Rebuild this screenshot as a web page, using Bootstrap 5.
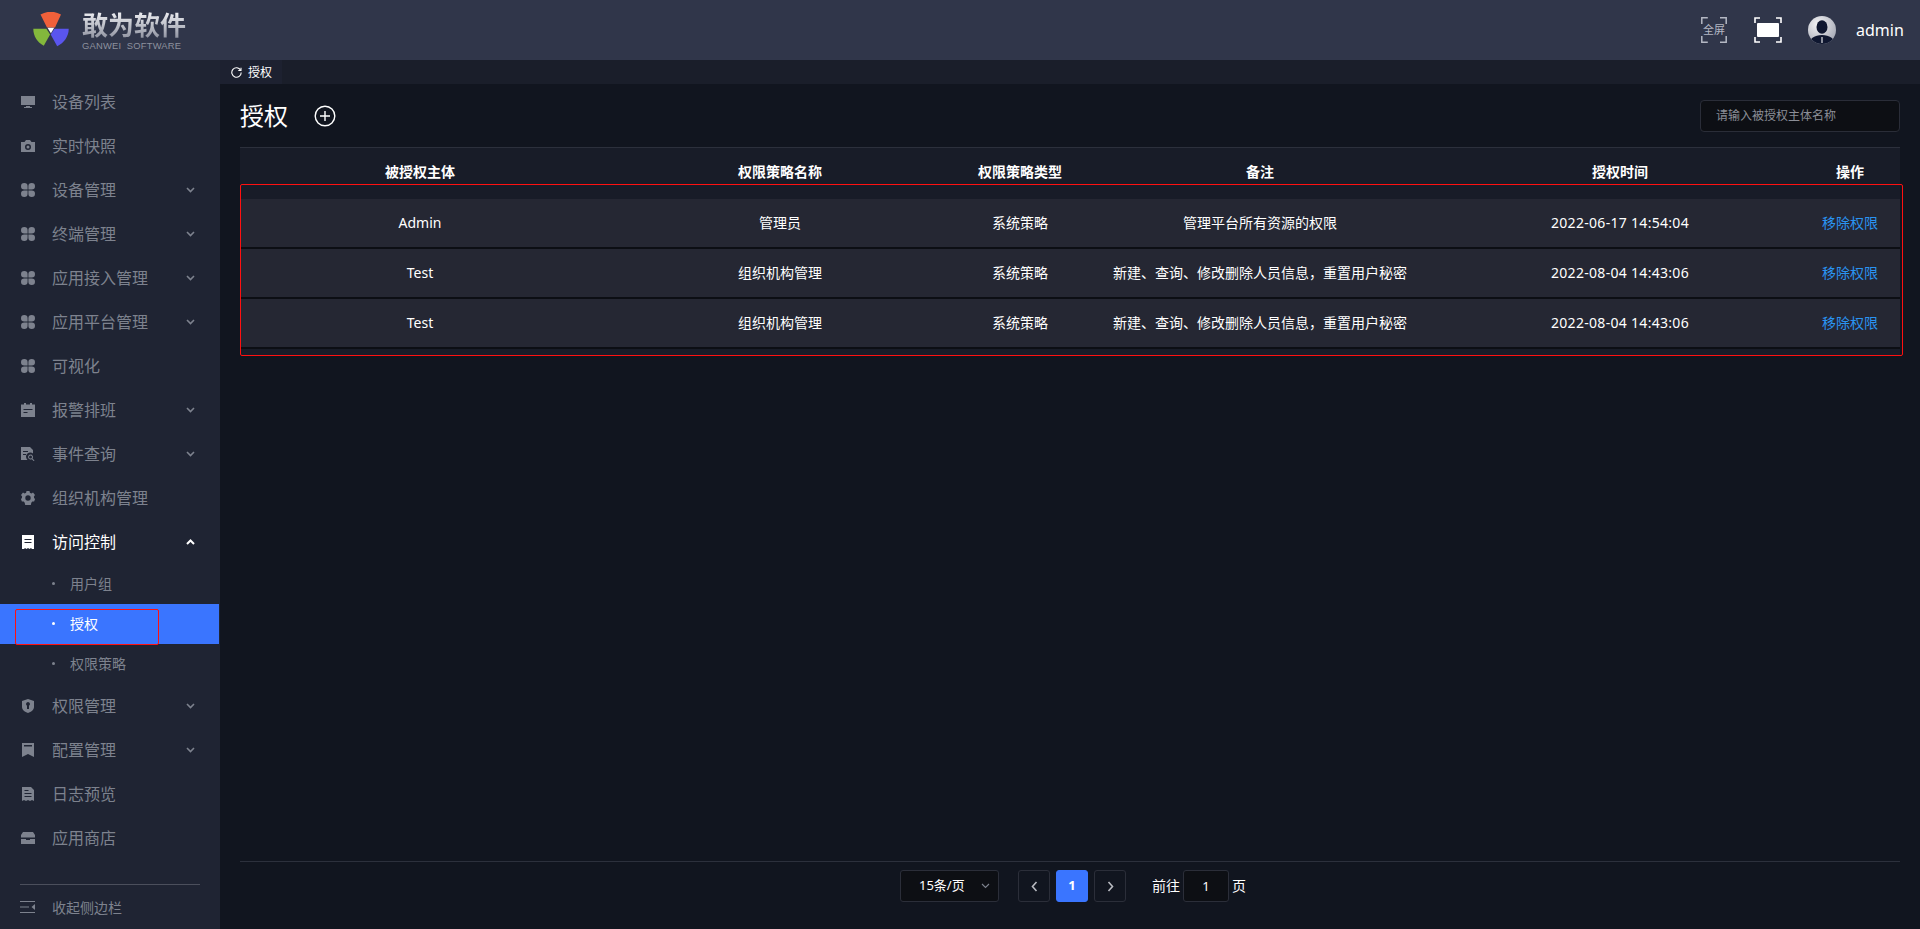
<!DOCTYPE html>
<html lang="zh">
<head>
<meta charset="utf-8">
<title>授权</title>
<link href="https://cdn.jsdelivr.net/npm/bootstrap@5.3.0/dist/css/bootstrap.min.css" rel="stylesheet">
<style>
html,body{height:929px;overflow:hidden}
body{background:#11151f;color:#fff;font-family:"Noto Sans","Noto Sans CJK SC",sans-serif;font-size:14px}
.topbar{height:60px;background:#30364a;padding-left:33px;padding-right:16px}
.brand-cn{font-size:26px;line-height:30px;font-weight:700;background:linear-gradient(#f4f5f8,#8a8e9c);-webkit-background-clip:text;background-clip:text;color:transparent;letter-spacing:0}
.brand-en{font-family:"Liberation Sans",sans-serif;font-size:9.4px;line-height:11px;color:#8d919e;white-space:pre;letter-spacing:.2px}
.brand-box{margin-left:13px;padding-top:1px}
.top-ico{display:block}
.admin-name{font-size:16px;color:#fff;margin-left:20px;width:48px}
.side{width:220px;flex:none;background:#1f2433;height:869px;padding-top:20px}
.side-item{height:44px;color:#7d828e;font-size:16px;padding-left:21px;padding-right:25px}
.side-item svg.ic{width:14px;height:14px;margin-right:17px;flex:none;fill:currentColor}
.side-item .chev{margin-left:auto;width:9px;height:6px;fill:none;stroke:currentColor;stroke-width:1.6}
.side-open{color:#fff}
.sub-item{height:40px;padding-left:52px;padding-bottom:2px;color:#7d828e;font-size:14px;width:219px}
.sub-item i{display:block;width:3px;height:3px;border-radius:50%;background:currentColor;margin-right:15px}
.sub-on{background:#3a75ff;color:#fff}
.mark-red{position:absolute;border:1px solid #ff1010;border-radius:2px;pointer-events:none}
.mark-side{left:15px;top:5px;width:144px;height:36px}
.side-foot{margin-top:auto;padding:0 20px 0}
.side-rule{border-top:1px solid #4b4f5c;height:1px}
.side-collapse{height:44px;color:#7d828e;font-size:14px}
.side-collapse svg{margin-right:17px;margin-left:0}
.main-pane{height:869px;min-width:0}
.tab-strip{height:24px;background:#1a1e2a}
.tab-one{width:62px;height:24px;background:#1d2130;font-size:12px;padding-left:11px;gap:6px;padding-top:1px}
.work{height:845px;padding:0 20px;display:flex;flex-direction:column}
.head-row{height:63px}
.page-h{font-size:24px;line-height:32px;margin:0;font-weight:400}
.add-ico{margin-left:26px}
.find-box{width:200px;height:32px;background:#0d0f14;border:1px solid #2a2d38;border-radius:4px;color:#e8e8e8;font-size:12px;padding:0 15px;outline:0}
.find-box::placeholder{color:#8b8e97;opacity:1}
.grid-wrap{position:relative;border-top:1px solid #2c303c;background:#181c28;height:209px}
.grid-t{table-layout:fixed;width:100%;margin:0;border-collapse:separate;border-spacing:0;color:#fff}
.grid-t th{height:36px;padding:11px 0 0;background:transparent;color:#fff;font-size:14px;font-weight:700;text-align:center;border:0;line-height:24px;box-shadow:none}
.grid-t tbody::before{content:"";display:block;height:15px}
.grid-t td{height:50px;padding:0 0 2px;background:#252733;color:#fff;text-align:center;vertical-align:middle;font-size:14px;border:0;border-bottom:2px solid #0c0e14;background-clip:padding-box;box-shadow:none}
.grid-t td.time-cell{letter-spacing:.3px}
.act-link{color:#2a94f2;text-decoration:none}
.mark-grid{left:0;top:36px;width:1663px;height:172px}
.pager-zone{margin-top:auto;border-top:1px solid #2c303c;height:68px;padding-top:8px;padding-left:6px}
.pg-select,.pg-btn,.pg-input{height:32px;border:1px solid #2b2e39;border-radius:3px;font-size:13px}
.pg-select{width:99px;background:#0d0f14;color:#fff;padding-left:18px;margin-right:19px}
.pg-btn{width:32px;background:transparent;color:#b8bac0;margin-right:6px;padding:0}
.pg-on{background:#3a75ff;border-color:#3a75ff;color:#fff;font-weight:700}
.pg-input{width:46px;background:#0d0f14;color:#fff;margin:0 3px;text-align:center;line-height:30px}
.pg-label{font-size:14px;line-height:32px}
</style>
</head>
<body>
<svg width="0" height="0" style="position:absolute"><defs>
<symbol id="i-clover" viewBox="0 0 14 14"><path d="M6.600 6.600V3.300A3.300 3.300 0 1 0 3.300 6.600zM7.400 6.600V3.300A3.300 3.300 0 1 1 10.700 6.600zM6.600 7.400V10.700A3.300 3.300 0 1 1 3.300 7.400zM7.400 7.400V10.700A3.300 3.300 0 1 0 10.700 7.400z"/></symbol>
</defs></svg>

<header class="topbar d-flex align-items-center">
  <svg width="36" height="36" viewBox="0 0 36 36" class="top-ico">
    <path d="M7.500 2.600a21 21 0 0 1 20.500 0L22 15.500h-8z" fill="#f0603a"/>
    <path d="M.300 16.800h13.100l3.700 5.600-6.300 11.300C4.200 30.400.3 24 .300 16.800z" fill="#83b83c"/>
    <path d="M35.700 16.800H21.500l-3.800 5.700 6.500 11.700c6.800-3.300 11.500-9.500 11.500-17.400z" fill="#5a55ee"/>
    <path d="M14.500 15.800h6.700l-3.300 5.500z" fill="#fff"/>
  </svg>
  <div class="brand-box">
    <div class="brand-cn">敢为软件</div>
    <div class="brand-en">GANWEI  SOFTWARE</div>
  </div>
  <div class="ms-auto d-flex align-items-center">
    <svg width="26" height="26" viewBox="0 0 26 26" class="top-ico" style="margin-right:27px">
      <path d="M.800 7V.800h6M19 .800h6.200V7M.800 19v6.200h6M19 25.200h6.200V19" fill="none" stroke="#b4b8c4" stroke-width="1.500"/>
      <text x="13" y="17" text-anchor="middle" font-size="11" fill="#b4b8c4" font-family="Noto Sans CJK SC">全屏</text>
    </svg>
    <svg width="28" height="26" viewBox="0 0 28 26" class="top-ico" style="margin-right:26px">
      <path d="M1 6V1h5M22 1h5v5M1 20v5h5M22 25h5v-5" fill="none" stroke="#fff" stroke-width="1.600"/>
      <rect x="3" y="6" width="22" height="14" rx="1" fill="#fff"/>
    </svg>
    <svg width="28" height="28" viewBox="0 0 28 28" class="top-ico">
      <defs>
        <clipPath id="av"><circle cx="14" cy="14" r="14"/></clipPath>
        <radialGradient id="avg" cx=".35" cy=".3" r=".85"><stop offset="0" stop-color="#f4f4f6"/><stop offset="1" stop-color="#9da1ae"/></radialGradient>
      </defs>
      <circle cx="14" cy="14" r="14" fill="url(#avg)"/>
      <g clip-path="url(#av)">
        <ellipse cx="14" cy="11" rx="5.500" ry="6.800" fill="#0f1730"/>
        <path d="M1 28c.5-5.500 5.500-9 13-9s12.500 3.500 13 9z" fill="#0f1730"/>
        <path d="M13.400 21h1.200v6h-1.200z" fill="#dfe1e6"/>
      </g>
    </svg>
    <div class="admin-name">admin</div>
  </div>
</header>

<div class="d-flex">
  <aside class="side d-flex flex-column">
    <div class="side-item d-flex align-items-center"><svg class="ic" viewBox="0 0 14 14"><path d="M0 1h14v9H0zM5 11h4v1h2v1H3v-1h2z"/></svg>设备列表</div>
    <div class="side-item d-flex align-items-center"><svg class="ic" viewBox="0 0 14 14"><path fill-rule="evenodd" d="M0 3h3.500L5 1h4l1.500 2H14v10H0zM7 5a3 3 0 1 0 0 6 3 3 0 0 0 0-6zm0 1.500a1.500 1.500 0 1 1 0 3 1.500 1.500 0 0 1 0-3z"/></svg>实时快照</div>
    <div class="side-item d-flex align-items-center"><svg class="ic"><use href="#i-clover"/></svg>设备管理<svg class="chev" viewBox="0 0 9 6"><path d="M1 1l3.500 3.500L8 1"/></svg></div>
    <div class="side-item d-flex align-items-center"><svg class="ic"><use href="#i-clover"/></svg>终端管理<svg class="chev" viewBox="0 0 9 6"><path d="M1 1l3.500 3.500L8 1"/></svg></div>
    <div class="side-item d-flex align-items-center"><svg class="ic"><use href="#i-clover"/></svg>应用接入管理<svg class="chev" viewBox="0 0 9 6"><path d="M1 1l3.500 3.500L8 1"/></svg></div>
    <div class="side-item d-flex align-items-center"><svg class="ic"><use href="#i-clover"/></svg>应用平台管理<svg class="chev" viewBox="0 0 9 6"><path d="M1 1l3.500 3.500L8 1"/></svg></div>
    <div class="side-item d-flex align-items-center"><svg class="ic"><use href="#i-clover"/></svg>可视化</div>
    <div class="side-item d-flex align-items-center"><svg class="ic" viewBox="0 0 14 14"><path fill-rule="evenodd" d="M3 0h2v1.500h4V0h2v1.500h3V14H0V1.500h3zM2.500 6v1h9V6zm0 3v1h4V9z"/></svg>报警排班<svg class="chev" viewBox="0 0 9 6"><path d="M1 1l3.500 3.500L8 1"/></svg></div>
    <div class="side-item d-flex align-items-center"><svg class="ic" viewBox="0 0 14 14"><path fill-rule="evenodd" d="M0 0h9l3 3v3.500a4 4 0 0 0-5.500 6.500H0zM2 4v1h5V4zm0 3v1h3V7z"/><path d="M9.500 7.500a2.500 2.500 0 0 1 2 4l2 2-.7.700-2-2a2.500 2.500 0 1 1-1.300-4.700zm0 1a1.500 1.500 0 1 0 0 3 1.500 1.500 0 0 0 0-3z"/></svg>事件查询<svg class="chev" viewBox="0 0 9 6"><path d="M1 1l3.500 3.500L8 1"/></svg></div>
    <div class="side-item d-flex align-items-center"><svg class="ic" viewBox="0 0 14 14"><path fill-rule="evenodd" d="M5.500 0h3l.4 1.800 1.500.7L12 1.600l2 2.400-1.100 1.500.2 1.500 1 1-1 2.500-1.800.1-1 1.200L9.800 14H4.200l-.5-2.200-1-1.200-1.800-.1-1-2.500 1-1 .2-1.500L0 4l2-2.400 1.600.9 1.500-.7zM7 4.300a2.700 2.700 0 1 0 0 5.400 2.700 2.700 0 0 0 0-5.400z"/></svg>组织机构管理</div>
    <div class="side-item side-open d-flex align-items-center"><svg class="ic" viewBox="0 0 14 14"><path fill-rule="evenodd" d="M1 0h12v14h-2l-1-1-1.500 1-1.500-1-1.500 1L4 13l-1 1H1zM3.500 4v1h7V4zm0 3v1h7V7z"/></svg>访问控制<svg class="chev" style="stroke-width:2" viewBox="0 0 9 6"><path d="M1 5l3.500-3.500L8 5"/></svg></div>
    <div class="sub-item d-flex align-items-center"><i></i>用户组</div>
    <div class="sub-item sub-on d-flex align-items-center position-relative"><i></i>授权<div class="mark-red mark-side"></div></div>
    <div class="sub-item d-flex align-items-center"><i></i>权限策略</div>
    <div class="side-item d-flex align-items-center"><svg class="ic" viewBox="0 0 14 14"><path fill-rule="evenodd" d="M7 0l6 2v6c0 3-3 5-6 6-3-1-6-3-6-6V2zM7 3a2 2 0 0 0-1 3.700V10h2V6.700A2 2 0 0 0 7 3z"/></svg>权限管理<svg class="chev" viewBox="0 0 9 6"><path d="M1 1l3.500 3.500L8 1"/></svg></div>
    <div class="side-item d-flex align-items-center"><svg class="ic" viewBox="0 0 14 14"><path fill-rule="evenodd" d="M1 0h12v14l-6-3-6 3zM3 2v1.500h8V2z"/></svg>配置管理<svg class="chev" viewBox="0 0 9 6"><path d="M1 1l3.500 3.500L8 1"/></svg></div>
    <div class="side-item d-flex align-items-center"><svg class="ic" viewBox="0 0 14 14"><path fill-rule="evenodd" d="M1 0h9l3 3v11l-2-1-2 1-2-1-2 1-2-1-2 1zM3.500 6v1h7V6zm0 3v1h7V9zm0-6v1h4V3z"/></svg>日志预览</div>
    <div class="side-item d-flex align-items-center"><svg class="ic" viewBox="0 0 14 14"><path fill-rule="evenodd" d="M2 1h10l2 3v2.500H0V4zM0 8h5v1h4V8h5v5H0z"/></svg>应用商店</div>
    <div class="side-foot">
      <div class="side-rule"></div>
      <div class="side-collapse d-flex align-items-center"><svg width="15" height="14" viewBox="0 0 15 14" fill="none" stroke="currentColor"><path d="M0 1.500h15M0 7h9M0 12.500h15"/><path d="M15 4v6l-3.500-3z" fill="currentColor" stroke="none"/></svg>收起侧边栏</div>
    </div>
  </aside>

  <main class="main-pane flex-grow-1">
    <div class="tab-strip">
      <div class="tab-one d-flex align-items-center"><svg width="11" height="11" viewBox="0 0 11 11" fill="none" stroke="#fff" stroke-width="1.100"><path d="M9.600 3.200A4.700 4.700 0 1 0 10.200 5.500"/><path d="M10 .8v2.700H7.300"/></svg>授权</div>
    </div>
    <div class="work">
      <div class="head-row d-flex align-items-center justify-content-between">
        <div class="d-flex align-items-center">
          <h1 class="page-h">授权</h1>
          <svg class="add-ico" width="22" height="22" viewBox="0 0 22 22" fill="none" stroke="#fff" stroke-width="1.400"><circle cx="11" cy="11" r="9.800"/><path d="M6 11h10M11 6v10"/></svg>
        </div>
        <input class="find-box" type="text" placeholder="请输入被授权主体名称">
      </div>
      <div class="grid-wrap">
        <table class="table grid-t">
          <colgroup><col style="width:360px"><col style="width:360px"><col style="width:120px"><col style="width:360px"><col style="width:360px"><col style="width:100px"></colgroup>
          <thead><tr><th>被授权主体</th><th>权限策略名称</th><th>权限策略类型</th><th>备注</th><th>授权时间</th><th>操作</th></tr></thead>
          <tbody>
            <tr><td>Admin</td><td>管理员</td><td>系统策略</td><td>管理平台所有资源的权限</td><td class="time-cell">2022-06-17 14:54:04</td><td><a class="act-link" href="#">移除权限</a></td></tr>
            <tr><td>Test</td><td>组织机构管理</td><td>系统策略</td><td>新建、查询、修改删除人员信息，重置用户秘密</td><td class="time-cell">2022-08-04 14:43:06</td><td><a class="act-link" href="#">移除权限</a></td></tr>
            <tr><td>Test</td><td>组织机构管理</td><td>系统策略</td><td>新建、查询、修改删除人员信息，重置用户秘密</td><td class="time-cell">2022-08-04 14:43:06</td><td><a class="act-link" href="#">移除权限</a></td></tr>
          </tbody>
        </table>
        <div class="mark-red mark-grid"></div>
      </div>
      <div class="pager-zone d-flex justify-content-center align-items-start">
        <div class="pg-select d-flex align-items-center">15条/页<svg class="ms-auto" style="margin-right:8px" width="9" height="6" viewBox="0 0 9 6" fill="none" stroke="#7d828e" stroke-width="1.100"><path d="M1 1l3.500 3.500L8 1"/></svg></div>
        <button class="pg-btn" type="button"><svg width="7" height="11" viewBox="0 0 7 11" fill="none" stroke="#b8bac0" stroke-width="1.600"><path d="M5.500 1L1.500 5.500l4 4.500"/></svg></button>
        <button class="pg-btn pg-on" type="button">1</button>
        <button class="pg-btn" type="button" style="margin-right:26px"><svg width="7" height="11" viewBox="0 0 7 11" fill="none" stroke="#b8bac0" stroke-width="1.600"><path d="M1.500 1l4 4.500-4 4.500"/></svg></button>
        <span class="pg-label">前往</span>
        <div class="pg-input">1</div>
        <span class="pg-label">页</span>
      </div>
    </div>
  </main>
</div>
</body>
</html>
